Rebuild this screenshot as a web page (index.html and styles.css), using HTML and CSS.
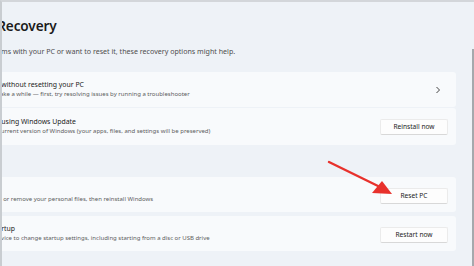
FILE: index.html
```html
<!DOCTYPE html>
<html lang="en">
<head>
<meta charset="utf-8">
<title>Recovery</title>
<link rel="stylesheet" href="styles.css">
</head>
<body>
<div class="window">
  <div class="viewport">
    <div class="page">
      <h1 class="title"><span class="crumb">System</span><span class="sep">›</span>Recovery</h1>
      <p class="lead">If you're having problems with your PC or want to reset it, these recovery options might help.</p>

      <div class="group">
        <div class="card">
          <div class="text">
            <div class="ct">Fix problems without resetting your PC</div>
            <div class="cs">Resetting can take a while — first, try resolving issues by running a troubleshooter</div>
          </div>
          <svg class="chev" width="6" height="8" viewBox="0 0 6 8"><path d="M1.5 1 L4.5 4 L1.5 7" fill="none" stroke="#444" stroke-width="1"/></svg>
        </div>
        <div class="card tall">
          <div class="text">
            <div class="ct">Fix problems using Windows Update</div>
            <div class="cs">Reinstall your current version of Windows (your apps, files, and settings will be preserved)</div>
          </div>
          <button class="btn">Reinstall now</button>
        </div>
      </div>

      <div class="section">Recovery options</div>

      <div class="group spaced">
        <div class="card">
          <div class="text">
            <div class="ct">Reset this PC</div>
            <div class="cs">Choose to keep or remove your personal files, then reinstall Windows</div>
          </div>
          <button class="btn">Reset PC</button>
        </div>
        <div class="card">
          <div class="text">
            <div class="ct">Advanced startup</div>
            <div class="cs">Restart your device to change startup settings, including starting from a disc or USB drive</div>
          </div>
          <button class="btn">Restart now</button>
        </div>
      </div>
    </div>
  </div>
  <div class="scrollbar"></div>
  <svg class="arrow" width="474" height="266" viewBox="0 0 474 266">
    <line x1="329" y1="162" x2="378" y2="186" stroke="#e8312c" stroke-width="2.4" stroke-linecap="round"/>
    <polygon points="392,194 372,193 382,181" fill="#e8312c"/>
  </svg>
</div>
</body>
</html>
```

FILE: styles.css
```css
html, body {
  margin: 0;
  padding: 0;
}
body {
  width: 474px;
  height: 266px;
  overflow: hidden;
  background: #eef2f7;
  font-family: "Noto Sans", "Open Sans", sans-serif;
  color: #1b1b1b;
}
.window {
  position: relative;
  display: flex;
  width: 474px;
  height: 266px;
  box-sizing: border-box;
  border-top: 2px solid #d3d6da;
  border-left: 2px solid #c9cdd1;
}
.viewport {
  flex: 1;
  overflow: hidden;
}
.page {
  margin-left: -77px;
  width: 531px;
}
.title {
  margin: 0;
  padding-top: 14px;
  padding-left: 4px;
  font-size: 13.6px;
  line-height: 20px;
  font-weight: 600;
  white-space: nowrap;
  letter-spacing: -0.1px;
}
.crumb {
  color: #6a6a6a;
}
.sep {
  margin: 0 8px;
  color: #6a6a6a;
}
.lead {
  margin: 9px 0 0;
  padding-left: 1px;
  font-size: 7.1px;
  line-height: 12px;
  color: #4e4e4e;
  white-space: nowrap;
}
.group {
  margin-top: 15px;
  display: flex;
  flex-direction: column;
  gap: 1px;
}
.group.spaced {
  margin-top: 14px;
  gap: 4px;
}
.section {
  margin-top: 6px;
  font-size: 7px;
  line-height: 12px;
  font-weight: 600;
}
.card {
  display: flex;
  align-items: center;
  justify-content: space-between;
  height: 35px;
  padding: 0 8px 0 33px;
  background: #f8fafc;
  border-radius: 3px;
}
.card.tall {
  height: 37px;
}
.text {
  white-space: nowrap;
}
.ct {
  font-size: 6.9px;
  line-height: 10px;
  color: #1b1b1b;
}
.cs {
  font-size: 6px;
  line-height: 9px;
  color: #5c5c5c;
}
.chev {
  margin-right: 7px;
}
.btn {
  width: 68px;
  height: 16px;
  padding: 0;
  font-family: inherit;
  font-size: 6.6px;
  color: #222;
  background: #fdfdfd;
  border: 1px solid #ebebeb;
  border-bottom-color: #d8d8d8;
  border-radius: 2px;
}
.group.spaced .btn {
  margin-top: 2px;
}
.scrollbar {
  width: 2px;
  margin-top: 47px;
  background: #a5a9ad;
}
.arrow {
  position: absolute;
  left: -2px;
  top: -2px;
  pointer-events: none;
}
```
